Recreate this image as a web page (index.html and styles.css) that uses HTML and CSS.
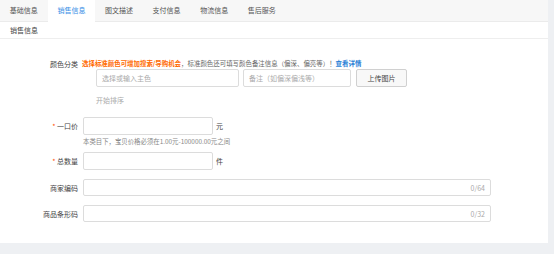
FILE: index.html
```html
<!DOCTYPE html>
<html lang="zh">
<head>
<meta charset="utf-8">
<link rel="stylesheet" href="styles.css">
</head>
<body>
<div class="page">
  <div class="tabs">
    <div class="tab">基础信息</div>
    <div class="tab active">销售信息</div>
    <div class="tab">图文描述</div>
    <div class="tab">支付信息</div>
    <div class="tab">物流信息</div>
    <div class="tab">售后服务</div>
  </div>
  <div class="section-head">销售信息</div>
  <div class="form">
    <div class="row-top">
      <div class="label">颜色分类</div>
      <div class="content">
        <div class="notice"><span class="strong">选择标准颜色可增加搜索/导购机会</span>，标准颜色还可填写颜色备注信息（偏深、偏亮等）！<span class="link">查看详情</span></div>
        <div class="color-inputs">
          <div class="input w-main"><span class="ph">选择或输入主色</span></div>
          <div class="input w-note"><span class="ph">备注（如偏深偏浅等）</span></div>
          <div class="btn">上传图片</div>
        </div>
        <div class="sort">开始排序</div>
      </div>
    </div>
    <div class="row row-price">
      <div class="label"><span class="req">*</span> 一口价</div>
      <div class="input w-num"></div>
      <span class="unit">元</span>
    </div>
    <div class="hint">本类目下，宝贝价格必须在1.00元-100000.00元之间</div>
    <div class="row row-qty">
      <div class="label"><span class="req">*</span> 总数量</div>
      <div class="input w-num"></div>
      <span class="unit">件</span>
    </div>
    <div class="row row-code">
      <div class="label">商家编码</div>
      <div class="input w-long short"><span class="count">0/64</span></div>
    </div>
    <div class="row row-bar">
      <div class="label">商品条形码</div>
      <div class="input w-long short"><span class="count">0/32</span></div>
    </div>
  </div>
</div>
</body>
</html>
```
FILE: styles.css
```css
html, body {
  margin: 0;
  padding: 0;
}
body {
  background: #eef0f3;
  font-family: "Noto Sans CJK SC", "Noto Sans", sans-serif;
  font-size: 7px;
  color: #333;
  width: 554px;
  height: 254px;
  overflow: hidden;
}
.page {
  width: 548px;
  height: 243px;
  background: #fff;
}
.tabs {
  display: flex;
  height: 22px;
  background: #f7f7f7;
  border-bottom: 1px solid #ebebeb;
  box-sizing: border-box;
}
.tab {
  width: 47.6px;
  line-height: 21px;
  text-align: center;
  color: #555;
}
.tab.active {
  background: #fff;
  color: #3a8ee6;
  height: 22px;
}
.section-head {
  height: 16px;
  line-height: 16px;
  padding-left: 10px;
  border-bottom: 1px solid #eeeeee;
  color: #444;
}
.form {
  padding-top: 20px;
}
.label {
  width: 78px;
  flex: none;
  text-align: right;
  margin-right: 5px;
  color: #444;
  line-height: 10px;
}
.req {
  color: #ff5000;
}
.row-top {
  display: flex;
  align-items: flex-start;
}
.content {
  display: flex;
  flex-direction: column;
}
.notice {
  line-height: 10px;
  font-size: 6.45px;
  color: #666;
  margin-left: -1px;
  white-space: nowrap;
}
.strong {
  color: #ff6a00;
  font-weight: bold;
}
.link {
  color: #2b7fd6;
  font-weight: bold;
}
.color-inputs {
  display: flex;
  margin-left: 13px;
}
.input {
  height: 18px;
  box-sizing: border-box;
  border: 1px solid #dcdcdc;
  border-radius: 2px;
  background: #fff;
  display: flex;
  align-items: center;
  padding: 0 5px;
}
.ph {
  color: #aaa;
}
.w-main {
  width: 143px;
  margin-right: 4px;
}
.w-note {
  width: 108px;
  margin-right: 5px;
}
.btn {
  width: 51px;
  height: 18px;
  box-sizing: border-box;
  border: 1px solid #d0d0d0;
  border-radius: 2px;
  background: #f8f8f8;
  display: flex;
  align-items: center;
  justify-content: center;
  color: #444;
}
.sort {
  margin-top: 8px;
  margin-left: 13px;
  line-height: 10px;
  color: #aaa;
}
.row {
  display: flex;
  align-items: center;
}
.row-price {
  margin-top: 12px;
}
.w-num {
  width: 130px;
}
.unit {
  margin-left: 3px;
  color: #444;
}
.hint {
  margin-top: 2px;
  margin-left: 83px;
  line-height: 10px;
  font-size: 6.4px;
  color: #888;
}
.row-qty {
  margin-top: 5px;
}
.row-code {
  margin-top: 9px;
}
.row-bar {
  margin-top: 9px;
}
.w-long {
  width: 408px;
  justify-content: flex-end;
}
.short {
  height: 17px;
}
.count {
  color: #aaa;
}
```
